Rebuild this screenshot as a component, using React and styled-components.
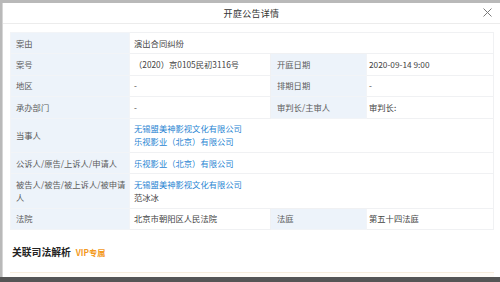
import styled, { createGlobalStyle } from "styled-components";

const GlobalStyle = createGlobalStyle`
  html, body {
    margin: 0;
    padding: 0;
    width: 500px;
    height: 282px;
    overflow: hidden;
    background: #b9b9b9;
  }
  * {
    box-sizing: border-box;
  }
`;

const font = `"Noto Sans CJK SC", "Noto Sans", sans-serif`;

const rows = [
  { label: "案由", value: "演出合同纠纷", span: true },
  { label: "案号", value: "（2020）京0105民初3116号", label2: "开庭日期", value2: "2020-09-14 9:00" },
  { label: "地区", value: "-", label2: "排期日期", value2: "-" },
  { label: "承办部门", value: "-", label2: "审判长/主审人", value2: "审判长:" },
  { label: "当事人", links: ["无锡盟美神影视文化有限公司", "乐视影业（北京）有限公司"], span: true },
  { label: "公诉人/原告/上诉人/申请人", links: ["乐视影业（北京）有限公司"], span: true },
  {
    label: "被告人/被告/被上诉人/被申请人",
    links: ["无锡盟美神影视文化有限公司"],
    extra: "范冰冰",
    span: true,
  },
  { label: "法院", value: "北京市朝阳区人民法院", label2: "法庭", value2: "第五十四法庭" },
];

export default function App() {
  return (
    <>
      <GlobalStyle />
      <Page>
        <Modal>
          <Header>
            <Title>开庭公告详情</Title>
            <Close aria-label="关闭">
              <svg width="9" height="9" viewBox="0 0 9 9">
                <path d="M0.5 0.5 L8.5 8.5 M8.5 0.5 L0.5 8.5" stroke="#7a7a7a" strokeWidth="1" fill="none" />
              </svg>
            </Close>
          </Header>
          <Body>
            <Table>
              <colgroup>
                <col style={{ width: 119 }} />
                <col style={{ width: 141 }} />
                <col style={{ width: 96 }} />
                <col />
              </colgroup>
              <tbody>
                {rows.map((r) => (
                  <tr key={r.label}>
                    <Label>{r.label}</Label>
                    {r.span ? (
                      <Value colSpan={3}>
                        {r.links
                          ? r.links.map((l) => <Link key={l}>{l}</Link>)
                          : r.value}
                        {r.extra && <Line>{r.extra}</Line>}
                      </Value>
                    ) : (
                      <>
                        <Value>{r.value}</Value>
                        <Label $second>{r.label2}</Label>
                        <Value $second>{r.value2}</Value>
                      </>
                    )}
                  </tr>
                ))}
              </tbody>
            </Table>
            <Section>
              <SectionTitle>关联司法解析</SectionTitle>
              <Vip>VIP专属</Vip>
            </Section>
            <VipBox />
          </Body>
        </Modal>
        <Shade />
      </Page>
    </>
  );
}

const Page = styled.div`
  width: 500px;
  height: 282px;
  display: flex;
  flex-direction: column;
  padding: 3px 0 0 2px;
  font-family: ${font};
`;

const Modal = styled.div`
  flex: 1;
  min-height: 0;
  background: #fff;
  display: flex;
  flex-direction: column;
  border-left: 1px solid #d6d6d6;
`;

const Shade = styled.div`
  height: 5px;
  margin-left: -2px;
  background: #555;
`;

const Header = styled.div`
  position: relative;
  height: 21px;
  flex-shrink: 0;
  border-bottom: 1px solid #ececec;
  display: flex;
  align-items: center;
  justify-content: center;
`;

const Title = styled.div`
  font-size: 9px;
  color: #333;
  letter-spacing: 0.3px;
`;

const Close = styled.span`
  position: absolute;
  right: 8px;
  top: 5px;
  display: flex;
`;

const Body = styled.div`
  flex: 1;
  min-height: 0;
  overflow-y: scroll;
  padding: 8px 6px 0 7px;
  &::-webkit-scrollbar {
    width: 9px;
  }
  &::-webkit-scrollbar-track {
    background: #f7f7f7;
  }
  &::-webkit-scrollbar-thumb {
    background: #bababa;
    border-left: 4px solid transparent;
    border-right: 1px solid transparent;
    background-clip: padding-box;
  }
`;

const Table = styled.table`
  width: 100%;
  table-layout: fixed;
  border-collapse: collapse;
  border: 1px solid #eef0f3;
  font-size: 8.3px;
  line-height: 13px;
`;

const Label = styled.td`
  background: #edf3fa;
  color: #5c5c5c;
  padding: 3.7px 0 3.7px ${(p) => (p.$second ? "6px" : "5px")};
  border: 1px solid #f2f4f7;
  vertical-align: middle;
`;

const Value = styled.td`
  color: #444;
  padding: 3.7px 5px 3.7px ${(p) => (p.$second ? "2px" : "4px")};
  border: 1px solid #f0f1f3;
  vertical-align: middle;
`;

const Link = styled.div`
  color: #2b86d3;
`;

const Line = styled.div`
  color: #444;
`;

const Section = styled.div`
  display: flex;
  align-items: center;
  gap: 5px;
  padding: 14px 0 0 2px;
  height: 30px;
  line-height: 16px;
`;

const SectionTitle = styled.div`
  font-size: 9.8px;
  font-weight: bold;
  color: #222;
`;

const Vip = styled.div`
  font-size: 8.2px;
  font-weight: bold;
  color: #f39a1e;
`;

const VipBox = styled.div`
  margin-top: 12px;
  height: 216px;
  border-top: 1px solid #f6ecdc;
  background: #fffcf7;
`;
